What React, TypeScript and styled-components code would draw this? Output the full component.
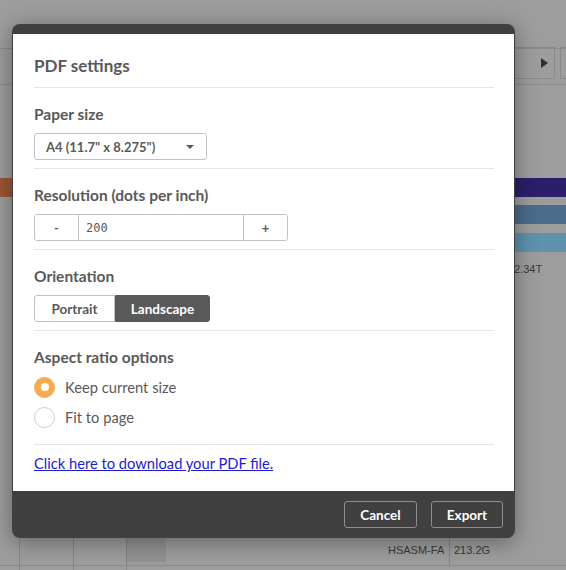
import React, { useState } from 'react';
import styled, { createGlobalStyle } from 'styled-components';

const GlobalStyle = createGlobalStyle`
  html, body {
    margin: 0;
    padding: 0;
    background: #9d9d9d;
  }
  * {
    box-sizing: border-box;
  }
`;

// ---------- sheet behind the modal (free canvas) ----------

const Sheet = styled.div`
  position: relative;
  width: 566px;
  height: 570px;
  overflow: hidden;
  background: #9d9d9d;
  font-family: 'Liberation Sans', Arial, sans-serif;
`;

const HLine = styled.div<{ $top: number }>`
  position: absolute;
  left: 0;
  right: 0;
  top: ${(p) => p.$top}px;
  height: 1px;
  background: #8c8c8c;
`;

const VLine = styled.div<{ $left: number; $top: number; $height: number }>`
  position: absolute;
  left: ${(p) => p.$left}px;
  top: ${(p) => p.$top}px;
  width: 1px;
  height: ${(p) => p.$height}px;
  background: #858585;
`;

const NavBox = styled.div<{ $left: number }>`
  position: absolute;
  left: ${(p) => p.$left}px;
  top: 47px;
  width: 48px;
  height: 32px;
  border: 1px solid #8a8a8a;
  display: flex;
  align-items: center;
  justify-content: flex-end;
  padding-right: 6px;
`;

const PlayArrow = styled.span`
  width: 0;
  height: 0;
  border-top: 5px solid transparent;
  border-bottom: 5px solid transparent;
  border-left: 7px solid #2e2e2e;
`;

const Bar = styled.div<{ $top: number; $left: number; $width: number; $color: string }>`
  position: absolute;
  top: ${(p) => p.$top}px;
  left: ${(p) => p.$left}px;
  width: ${(p) => p.$width}px;
  height: 19px;
  background: ${(p) => p.$color};
`;

const SheetText = styled.span<{ $top: number; $left: number }>`
  position: absolute;
  top: ${(p) => p.$top}px;
  left: ${(p) => p.$left}px;
  font-size: 11px;
  color: #3a3a3a;
  line-height: 14px;
`;

const Block = styled.div`
  position: absolute;
  left: 127px;
  top: 538px;
  width: 39px;
  height: 24px;
  background: #929292;
`;

// ---------- modal ----------

const Overlay = styled.div`
  position: absolute;
  inset: 0;
  padding: 24px 0 0 12px;
`;

const Dialog = styled.div`
  width: 503px;
  border-radius: 8px;
  background: #404040;
  padding-top: 10px;
  box-shadow: 0 4px 22px rgba(0, 0, 0, 0.38);
  overflow: hidden;
  font-family: Lato, 'Open Sans', sans-serif;
  color: #595959;
`;

const Body = styled.div`
  background: #ffffff;
  margin: 0 1px;
  padding: 0 20px 0 21px;
`;

const Title = styled.h1`
  margin: 0;
  padding: 22px 0 11px;
  font-size: 17px;
  line-height: 20px;
  font-weight: 700;
  color: #595959;
  border-bottom: 1px solid #e6e6e6;
`;

const Section = styled.section<{ $bottom?: number }>`
  padding: 17px 0 ${(p) => p.$bottom ?? 8}px;
  border-bottom: 1px solid #e6e6e6;
  display: flex;
  flex-direction: column;
  align-items: flex-start;
`;

const Label = styled.h2`
  margin: 0 0 10px;
  font-size: 15.5px;
  line-height: 18px;
  font-weight: 700;
  color: #595959;
`;

const Select = styled.button`
  width: 173px;
  height: 27px;
  display: flex;
  align-items: center;
  justify-content: space-between;
  padding: 0 11px;
  background: #fff;
  border: 1px solid #c2c2c2;
  border-radius: 3px;
  font-family: inherit;
  font-size: 13px;
  font-weight: 700;
  color: #595959;
  cursor: pointer;
`;

const Caret = styled.span`
  width: 0;
  height: 0;
  margin-right: 1px;
  border-left: 4px solid transparent;
  border-right: 4px solid transparent;
  border-top: 4px solid #595959;
`;

const Stepper = styled.div`
  display: flex;
  width: 254px;
  height: 27px;
  border: 1px solid #c2c2c2;
  border-radius: 3px;
  overflow: hidden;
`;

const StepButton = styled.button`
  width: 43px;
  border: none;
  background: #fff;
  font-family: inherit;
  font-size: 13px;
  font-weight: 700;
  color: #595959;
  cursor: pointer;
`;

const StepInput = styled.input`
  flex: 1;
  min-width: 0;
  border: none;
  border-left: 1px solid #c2c2c2;
  border-right: 1px solid #c2c2c2;
  padding: 0 7px;
  font-family: 'DejaVu Sans Mono', 'Liberation Mono', monospace;
  font-size: 12px;
  color: #595959;
  outline: none;
`;

const Toggle = styled.div`
  display: flex;
  height: 27px;
`;

const ToggleButton = styled.button<{ $active: boolean; $width: number }>`
  width: ${(p) => p.$width}px;
  border: 1px solid ${(p) => (p.$active ? '#595959' : '#c2c2c2')};
  background: ${(p) => (p.$active ? '#595959' : '#ffffff')};
  color: ${(p) => (p.$active ? '#ffffff' : '#595959')};
  font-family: inherit;
  font-size: 13.5px;
  font-weight: 700;
  cursor: pointer;

  &:first-child {
    border-radius: 3px 0 0 3px;
  }
  &:last-child {
    border-radius: 0 3px 3px 0;
  }
`;

const RadioList = styled.div`
  display: flex;
  flex-direction: column;
  gap: 8px;
`;

const RadioRow = styled.label`
  display: flex;
  align-items: center;
  gap: 10px;
  height: 22px;
  font-size: 14.7px;
  color: #595959;
  cursor: pointer;
`;

const RadioDot = styled.span<{ $checked: boolean }>`
  width: 21px;
  height: 21px;
  border-radius: 50%;
  background: ${(p) => (p.$checked ? '#f6ab4f' : '#ffffff')};
  border: 1px solid ${(p) => (p.$checked ? '#f6ab4f' : '#cccccc')};
  display: flex;
  align-items: center;
  justify-content: center;

  &::after {
    content: '';
    width: 8px;
    height: 8px;
    border-radius: 50%;
    background: #fff;
    display: ${(p) => (p.$checked ? 'block' : 'none')};
  }
`;

const LinkRow = styled.div`
  padding: 9px 0 19px;
  font-size: 14.7px;
  line-height: 18px;
  height: 46px;
`;

const DownloadLink = styled.a`
  color: #1c1cd2;
  text-decoration: underline;
`;

const Footer = styled.footer`
  height: 47px;
  display: flex;
  justify-content: flex-end;
  align-items: flex-start;
  gap: 14px;
  padding: 10px 12px 0 0;
`;

const FooterButton = styled.button<{ $width: number }>`
  width: ${(p) => p.$width}px;
  height: 27px;
  border: 1px solid #8e8e8e;
  border-radius: 3px;
  background: transparent;
  color: #ffffff;
  font-family: inherit;
  font-size: 13.5px;
  font-weight: 700;
  cursor: pointer;
`;

export default function App() {
  const [orientation, setOrientation] = useState<'portrait' | 'landscape'>('landscape');
  const [aspect, setAspect] = useState<'keep' | 'fit'>('keep');
  const [dpi, setDpi] = useState(200);

  return (
    <>
      <GlobalStyle />
      <Sheet>
        <HLine $top={48} />
        <HLine $top={84} />
        <NavBox $left={507}>
          <PlayArrow />
        </NavBox>
        <NavBox $left={560} />
        <Bar $top={178} $left={0} $width={20} $color="#9c5636" />
        <Bar $top={178} $left={505} $width={61} $color="#2c1e6a" />
        <Bar $top={205} $left={505} $width={61} $color="#4b6c8b" />
        <Bar $top={233} $left={505} $width={61} $color="#5e92ad" />
        <SheetText $top={262} $left={514}>2.34T</SheetText>
        <HLine $top={565} />
        <VLine $left={19} $top={530} $height={40} />
        <VLine $left={73} $top={530} $height={40} />
        <VLine $left={126} $top={530} $height={40} />
        <Block />
        <SheetText $top={543} $left={388}>HSASM-FA</SheetText>
        <VLine $left={449} $top={530} $height={35} />
        <SheetText $top={543} $left={454}>213.2G</SheetText>

        <Overlay>
          <Dialog>
            <Body>
              <Title>PDF settings</Title>

              <Section>
                <Label>Paper size</Label>
                <Select>
                  A4 (11.7" x 8.275")
                  <Caret />
                </Select>
              </Section>

              <Section>
                <Label>Resolution (dots per inch)</Label>
                <Stepper>
                  <StepButton onClick={() => setDpi(dpi - 1)}>-</StepButton>
                  <StepInput value={dpi} onChange={(e) => setDpi(Number(e.target.value) || 0)} />
                  <StepButton onClick={() => setDpi(dpi + 1)}>+</StepButton>
                </Stepper>
              </Section>

              <Section>
                <Label>Orientation</Label>
                <Toggle>
                  <ToggleButton
                    $width={81}
                    $active={orientation === 'portrait'}
                    onClick={() => setOrientation('portrait')}
                  >
                    Portrait
                  </ToggleButton>
                  <ToggleButton
                    $width={95}
                    $active={orientation === 'landscape'}
                    onClick={() => setOrientation('landscape')}
                  >
                    Landscape
                  </ToggleButton>
                </Toggle>
              </Section>

              <Section $bottom={16}>
                <Label>Aspect ratio options</Label>
                <RadioList>
                  <RadioRow onClick={() => setAspect('keep')}>
                    <RadioDot $checked={aspect === 'keep'} />
                    Keep current size
                  </RadioRow>
                  <RadioRow onClick={() => setAspect('fit')}>
                    <RadioDot $checked={aspect === 'fit'} />
                    Fit to page
                  </RadioRow>
                </RadioList>
              </Section>

              <LinkRow>
                <DownloadLink href="#">Click here to download your PDF file.</DownloadLink>
              </LinkRow>
            </Body>
            <Footer>
              <FooterButton $width={73}>Cancel</FooterButton>
              <FooterButton $width={72}>Export</FooterButton>
            </Footer>
          </Dialog>
        </Overlay>
      </Sheet>
    </>
  );
}
